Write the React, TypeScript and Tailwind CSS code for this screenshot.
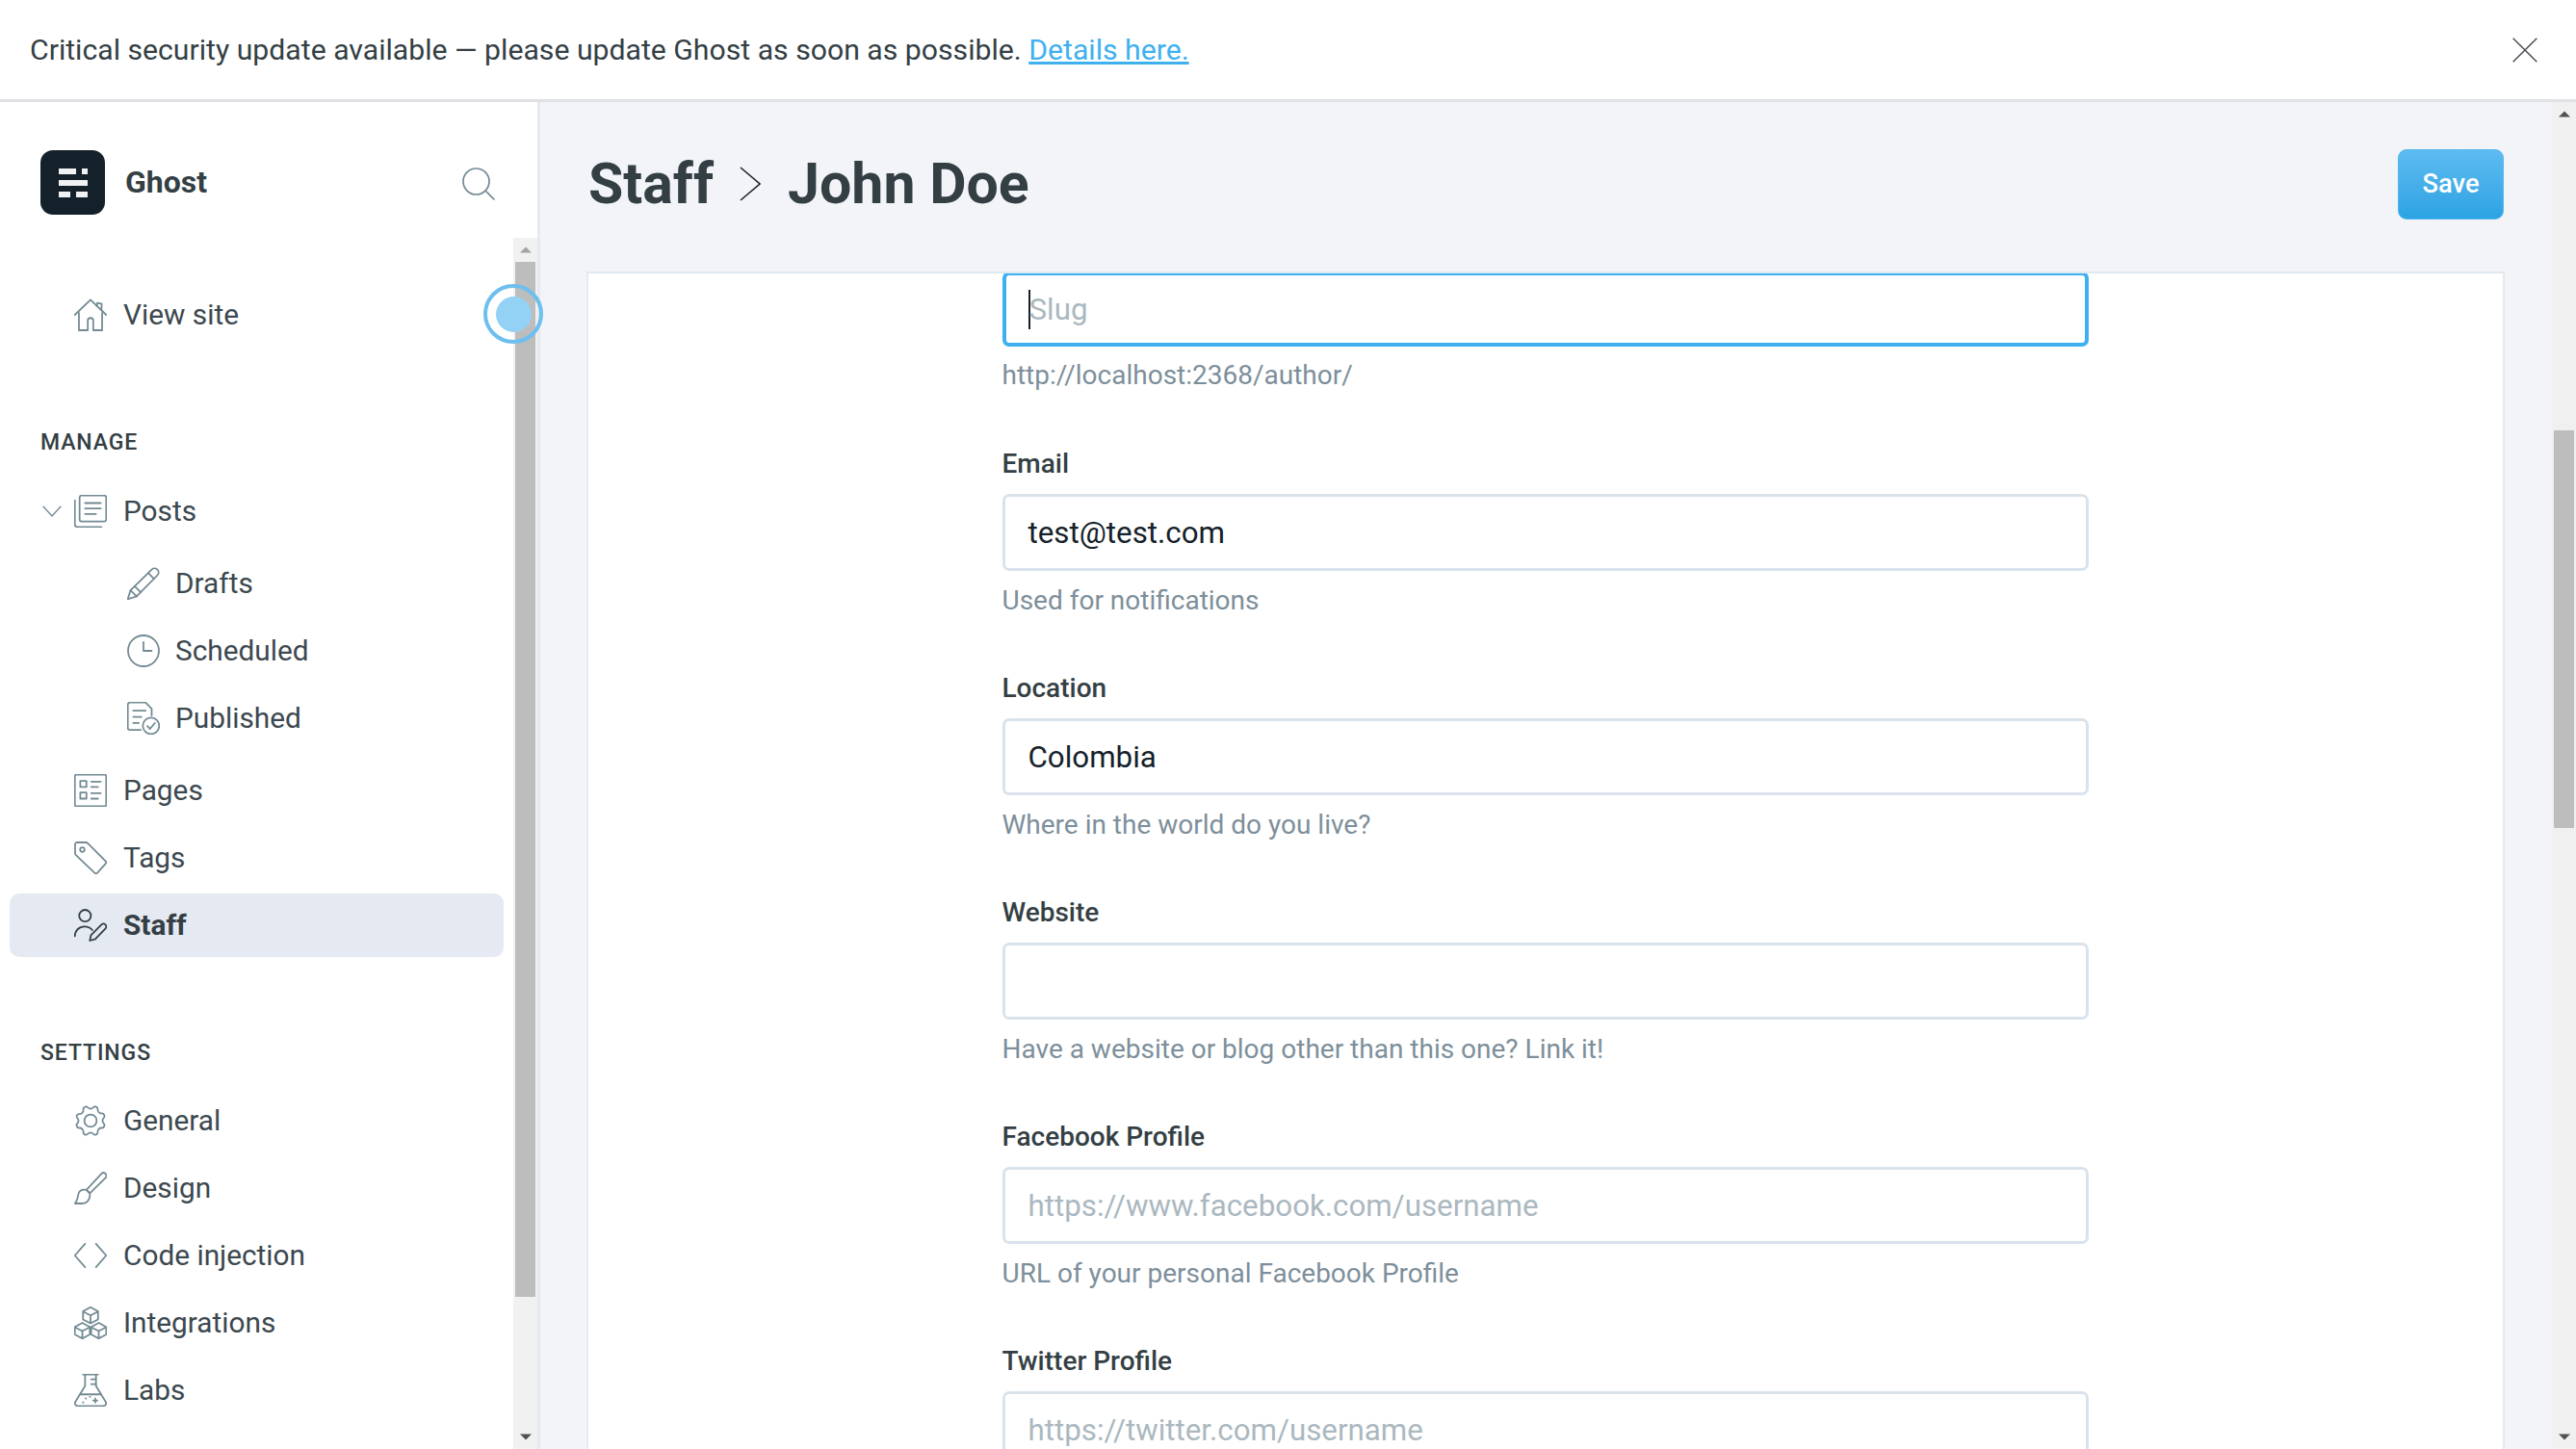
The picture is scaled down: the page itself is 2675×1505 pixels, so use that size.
import type { ReactNode } from 'react'

const font = { fontFamily: 'Roboto, sans-serif' }

function Icon({ children, className = '' }: { children: ReactNode; className?: string }) {
  return (
    <svg
      viewBox="0 0 24 24"
      fill="none"
      stroke="#738a94"
      strokeWidth={1.25}
      strokeLinecap="round"
      strokeLinejoin="round"
      className={`h-[34px] w-[34px] shrink-0 ${className}`}
    >
      {children}
    </svg>
  )
}

const icons: Record<string, ReactNode> = {
  home: (
    <>
      <path d="M.5 12 12 1l11.5 11" />
      <path d="M16.500 5.500 17 3.200l3.200.8-.2 4.500" />
      <path d="M3.500 10.500v12.800h6.500v-7a2 2 0 0 1 4 0v7h6.500V10.500" />
    </>
  ),
  posts: (
    <>
      <rect x="4" y=".5" width="19.500" height="19" rx="1.500" />
      <path d="M.5 4v17.500a2 2 0 0 0 2 2H20" />
      <path d="M8 6h11.500M8 10h11.500M8 14h8" />
    </>
  ),
  pencil: (
    <>
      <path d="M7 21.500.5 23.500l2-6.500L18 1.800a3 3 0 0 1 4.200 0 3 3 0 0 1 0 4.200z" />
      <path d="m15.500 4.300 4.200 4.200M2.500 17l4.500 4.500M5.500 14l4.500 4.500" />
    </>
  ),
  clock: (
    <>
      <circle cx="12" cy="12" r="11.300" />
      <path d="M12 5.500V12h6" />
    </>
  ),
  published: (
    <>
      <path d="M10 20.500H2a1.500 1.500 0 0 1-1.500-1.500V2A1.500 1.500 0 0 1 2 .5h11.500L18 5v5" />
      <path d="M4.500 6.500h9M4.500 11h6M4.500 15.500h4" />
      <circle cx="17.500" cy="17.500" r="6" />
      <path d="m14.800 17.800 2 2 3.500-4.300" />
    </>
  ),
  pages: (
    <>
      <rect x=".5" y=".5" width="23" height="23" rx="1" />
      <rect x="4.500" y="5" width="4.500" height="4.500" />
      <rect x="4.500" y="13.500" width="4.500" height="4.500" />
      <path d="M12.500 5.500h7M12.500 9.500h5M12.500 14h7M12.500 18h5" />
    </>
  ),
  tag: (
    <>
      <path d="M2 .7h6.500a2 2 0 0 1 1.500.6l13 13a1.500 1.500 0 0 1 0 2L17 23a1.500 1.500 0 0 1-2 0L1.300 10a2 2 0 0 1-.6-1.500V2A1.300 1.300 0 0 1 2 .7z" />
      <circle cx="6" cy="6" r="1.600" />
    </>
  ),
  staff: (
    <>
      <circle cx="8" cy="5" r="4.300" stroke="#343f44" />
      <path d="M.5 20c0-4 3-7 7-7 2.500 0 4.400.8 5.800 2.500" stroke="#343f44" />
      <path d="m11.500 23.300.8-4L20 11.600a2 2 0 0 1 3 2.800l-7.500 7.800z" stroke="#343f44" />
    </>
  ),
  gear: (
    <>
      <circle cx="12" cy="12" r="4.500" />
      <path d="M10 2.300a2.700 2.700 0 0 0 4 0c1.200-1.300 3.500-.3 3.300 1.500a2.700 2.700 0 0 0 2.900 2.900c1.800-.1 2.700 2.100 1.500 3.300a2.700 2.700 0 0 0 0 4c1.200 1.200.3 3.400-1.500 3.300a2.700 2.700 0 0 0-2.900 2.900c.2 1.800-2.100 2.800-3.300 1.500a2.700 2.700 0 0 0-4 0c-1.200 1.300-3.500.3-3.300-1.500a2.700 2.700 0 0 0-2.900-2.900c-1.800.1-2.700-2.100-1.500-3.300a2.700 2.700 0 0 0 0-4C1.100 9.200 2 7 3.800 7.100a2.700 2.700 0 0 0 2.900-2.900C6.500 2 8.800 1 10 2.300z" />
    </>
  ),
  brush: (
    <>
      <path d="M9 13.300 20 1.500a2.100 2.100 0 0 1 3 3L11.500 15.800z" />
      <path d="M9 13.300c-3.300-.5-5.500 1-6 3.500-.5 2.800-1 5-2.500 6.500H6c3.500 0 6-3 5.500-7.500z" />
    </>
  ),
  code: <path d="M8 3.500.5 12 8 20.500M16 3.500l7.500 8.500-7.500 8.500" />,
  cubes: (
    <>
      <path d="m12 .5 5.500 3v6L12 12.300 6.500 9.500v-6zM6.500 3.700 12 6.500l5.500-2.800M12 6.500v5.800" />
      <path d="m6 12 5.500 3v5.500L6 23.500l-5.500-3V15zM.5 15.200 6 18l5.500-2.800M6 18v5.500" />
      <path d="m18 12 5.500 3v5.500l-5.500 3-5.500-3V15zM12.500 15.200 18 18l5.500-2.800M18 18v5.500" />
    </>
  ),
  flask: (
    <>
      <path d="M6.500.5h11M8 .5v8.300L1 20.300c-1 1.700 0 3.200 2 3.200h18c2 0 3-1.500 2-3.200L16 8.800V.5" />
      <path d="M12.500 4h3.500M12.500 7.500h3.500M4.500 15h15" />
      <path d="M15.500 18v3M14 19.500h3M6.500 21h.2M8.500 18h.2M11.500 16.800h.2" />
    </>
  ),
}

function Row({ icon, label, active, sub, chevron }: { icon: string; label: string; active?: boolean; sub?: boolean; chevron?: boolean }) {
  return (
    <div className={`relative mt-1 flex h-[66px] items-center rounded-[10px] ${sub ? 'pl-[122px]' : 'pl-[67px]'} ${active ? 'bg-[#e5e9f2]' : ''}`}>
      {chevron && (
        <svg viewBox="0 0 20 12" fill="none" stroke="#738a94" strokeWidth={1.3} className="absolute left-[34px] top-[27px] h-[12px] w-[20px]">
          <path d="M.7.7 10 11 19.300.7" />
        </svg>
      )}
      <Icon>{icons[icon]}</Icon>
      <span className={`${sub ? 'ml-[16px]' : 'ml-[17px]'} text-[29.800px] leading-none ${active ? 'font-bold text-[#343f44]' : 'text-[#3c484f]'}`}>{label}</span>
    </div>
  )
}

function Heading({ children, className = '' }: { children: ReactNode; className?: string }) {
  return <div className={`pl-[32px] text-[23px] font-medium uppercase leading-none tracking-[0.9px] text-[#343f44] ${className}`}>{children}</div>
}

function Arrow({ up, color }: { up?: boolean; color: string }) {
  return (
    <div className="flex h-[25px] items-center justify-center">
      <svg viewBox="0 0 12 6" className="h-[7px] w-[12px]" fill={color}>
        {up ? <path d="M6 0l6 6H0z" /> : <path d="M0 0h12L6 6z" />}
      </svg>
    </div>
  )
}

function Field({ label, value, placeholder, hint }: { label: string; value?: string; placeholder?: string; hint: string }) {
  return (
    <div className="mb-[53px] pt-[6px]">
      <div className="mb-[15px] text-[28px] font-medium leading-[32px] text-[#343f44]">{label}</div>
      <div className="flex h-[80px] items-center rounded-[7px] border-[3px] border-[#dae3ec] bg-white pl-[24px] pt-[2px] text-[31.300px] leading-none">
        {value ? <span className="text-[#15212a]">{value}</span> : <span className="text-[#abb8bf]">{placeholder}</span>}
      </div>
      <div className="mt-[15px] h-[32px] text-[28px] leading-[32px] text-[#7d8f9b]">{hint}</div>
    </div>
  )
}

export default function App() {
  return (
    <div className="flex h-[1505px] w-[2675px] flex-col overflow-hidden bg-white" style={font}>
      <div className="flex h-[106px] shrink-0 items-center justify-between border-b-[3px] border-[#dfe1e5] pl-[31px] pr-[40px]">
        <p className="pt-[2px] text-[30.200px] leading-none text-[#343f44]">
          Critical security update available — please update Ghost as soon as possible.{' '}
          <span className="text-[#3eb0ef] underline">Details here.</span>
        </p>
        <svg viewBox="0 0 26 26" fill="none" stroke="#4a4f53" strokeWidth={1.500} className="h-[26px] w-[26px]">
          <path d="M.7.7 25.300 25.300M25.300.7.7 25.300" />
        </svg>
      </div>

      <div className="flex min-h-0 flex-1">
        <aside className="flex w-[561px] shrink-0 flex-col border-r-[3px] border-[#e6e9f0] bg-white">
          <div className="flex h-[141px] shrink-0 items-start pl-[42px] pr-[44px] pt-[50px]">
            <div className="flex h-[67px] w-[67px] items-center justify-center rounded-[13px] bg-[#15212a]">
              <svg viewBox="0 0 30 30" fill="#f0f2f3" className="h-[30px] w-[30px]">
                <rect x="0" y="0" width="18" height="6" />
                <rect x="24" y="0" width="6" height="6" />
                <rect x="0" y="12" width="30" height="6" />
                <rect x="0" y="24" width="12" height="6" />
                <rect x="18" y="24" width="12" height="6" />
              </svg>
            </div>
            <span className="ml-[21px] mt-[13px] text-[32px] font-bold leading-[40px] text-[#343f44]">Ghost</span>
            <svg viewBox="0 0 34 34" fill="none" stroke="#738a94" strokeWidth={1.700} strokeLinecap="round" className="ml-auto mt-[18px] h-[34px] w-[34px]">
              <circle cx="14.500" cy="14.500" r="13.500" />
              <path d="m24 24 9 9" />
            </svg>
          </div>

          <div className="flex min-h-0 flex-1">
            <nav className="min-w-0 flex-1 pl-[10px] pr-[10px] pt-[43px]">
              <Row icon="home" label="View site" />
              <Heading className="mt-[88px]">Manage</Heading>
              <div className="mt-[27px]">
                <Row icon="posts" label="Posts" chevron />
                <div className="py-[5px]">
                  <Row icon="pencil" label="Drafts" sub />
                  <Row icon="clock" label="Scheduled" sub />
                  <Row icon="published" label="Published" sub />
                </div>
                <Row icon="pages" label="Pages" />
                <Row icon="tag" label="Tags" />
                <Row icon="staff" label="Staff" active />
              </div>
              <Heading className="mt-[88px]">Settings</Heading>
              <div className="mt-[26px]">
                <Row icon="gear" label="General" />
                <Row icon="brush" label="Design" />
                <Row icon="code" label="Code injection" />
                <Row icon="cubes" label="Integrations" />
                <Row icon="flask" label="Labs" />
              </div>
            </nav>
            <div className="flex w-[25px] shrink-0 flex-col bg-[#f1f1f1]">
              <Arrow up color="#a3a3a3" />
              <div className="mx-[2px] h-[1075px] bg-[#bdbdbd]" />
              <div className="flex-1" />
              <Arrow color="#505050" />
            </div>
          </div>
        </aside>

        <main className="flex min-w-0 flex-1 flex-col bg-[#f2f4f8] pl-[48px] pr-[49px]">
          <div className="flex h-[176px] shrink-0 items-start justify-between pt-[49px]">
            <div className="-mt-[1px] flex h-[73px] items-center pl-[2px] text-[59px] font-bold leading-none text-[#343f44]">
              <span>Staff</span>
              <svg viewBox="0 0 22 36" fill="none" stroke="#15212a" strokeWidth={1.500} className="ml-[27px] mr-[28px] h-[36px] w-[22px]">
                <path d="M1 1l20 17L1 35" />
              </svg>
              <span>John Doe</span>
            </div>
            <button className="mr-[1px] h-[73px] w-[110px] rounded-[9px] border border-[#55b6ef] bg-gradient-to-b from-[#5dbbf1] to-[#2ba3e3] text-[27.300px] font-medium text-white">
              Save
            </button>
          </div>
          <div className="min-h-0 flex-1 overflow-hidden border-x-2 border-t-2 border-x-[#e6e9ef] border-t-[#dfe9f1] bg-white pr-[1px]">
            <div className="mx-auto -mt-[2px] w-[1128px]">
              <div className="flex h-[78px] items-center rounded-[7px] border-[4px] border-[#3eb0ef] pl-[23px] pt-[1px] text-[31.300px] leading-none">
                <span className="h-[41px] w-[2px] bg-[#15212a]" />
                <span className="-ml-[1px] text-[#abb8bf]">Slug</span>
              </div>
              <div className="mb-[54px] mt-[14px] h-[32px] text-[28px] leading-[32px] text-[#7d8f9b]">http://localhost:2368/author/</div>
              <Field label="Email" value="test@test.com" hint="Used for notifications" />
              <Field label="Location" value="Colombia" hint="Where in the world do you live?" />
              <Field label="Website" hint="Have a website or blog other than this one? Link it!" />
              <Field label="Facebook Profile" placeholder="https://www.facebook.com/username" hint="URL of your personal Facebook Profile" />
              <Field label="Twitter Profile" placeholder="https://twitter.com/username" hint="" />
            </div>
          </div>
        </main>

        <div className="flex w-[25px] shrink-0 flex-col bg-[#f0f0f0]">
          <Arrow up color="#505050" />
          <div className="h-[316px]" />
          <div className="ml-[2px] mr-[2px] h-[413px] bg-[#bdbdbd]" />
          <div className="flex-1" />
          <Arrow color="#505050" />
        </div>
      </div>

      <div className="pointer-events-none absolute left-[502px] top-[295px] flex h-[62px] w-[62px] items-center justify-center rounded-full border-[4px] border-[#6cbfee]">
        <div className="h-[37px] w-[37px] rounded-full bg-[#94d2f5]" />
      </div>
    </div>
  )
}
